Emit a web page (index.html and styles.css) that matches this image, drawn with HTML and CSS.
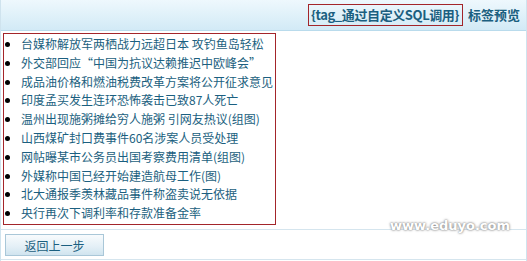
FILE: index.html
```html
<!doctype html>
<html lang="zh-CN">
    <head>
        <meta charset="utf-8">
        <title>标签预览</title>
        <link rel="stylesheet" href="styles.css">
    </head>
    <body>
        <div class="page">
            <div class="head">
                <span class="tag-name">{tag_通过自定义SQL调用}</span>
                <span class="head-title">标签预览</span>
            </div>
            <div class="preview">
                <ul class="list">
                    <li>台媒称解放军两栖战力远超日本 攻钓鱼岛轻松</li>
                    <li>外交部回应“中国为抗议达赖推迟中欧峰会”</li>
                    <li>成品油价格和燃油税费改革方案将公开征求意见</li>
                    <li>印度孟买发生连环恐怖袭击已致87人死亡</li>
                    <li>温州出现施粥摊给穷人施粥 引网友热议(组图)</li>
                    <li>山西煤矿封口费事件60名涉案人员受处理</li>
                    <li>网帖曝某市公务员出国考察费用清单(组图)</li>
                    <li>外媒称中国已经开始建造航母工作(图)</li>
                    <li>北大通报季羡林藏品事件称盗卖说无依据</li>
                    <li>央行再次下调利率和存款准备金率</li>
                </ul>
                <span class="mark">www.eduyo.com</span>
            </div>
            <div class="foot">
                <button class="btn">返回上一步</button>
            </div>
        </div>
    </body>
</html>
```

FILE: styles.css
```css
html {
    font-size: 12px;
    font-family: "Noto Sans CJK SC", "Liberation Sans", sans-serif;
}
body {
    margin: 0;
    background: #fff;
    color: #1b5f80;
}
.page {
    width: 527px;
    height: 261px;
    box-sizing: border-box;
    border-left: 1px solid #cfe3ee;
    border-right: 1px solid #cfe3ee;
    display: flex;
    flex-direction: column;
}
.head {
    height: 31px;
    flex-shrink: 0;
    box-sizing: border-box;
    display: flex;
    align-items: center;
    justify-content: flex-end;
    padding: 0 6px 1px 0;
    background: linear-gradient(#eef8fd, #d2eaf6);
    border-bottom: 1px solid #b9dbec;
    font-weight: bold;
    font-size: 13px;
    color: #1b5f80;
}
.tag-name {
    border: 1px solid #a3252a;
    padding: 2px 3px 2px 2px;
    margin-right: 5px;
    line-height: 16px;
    letter-spacing: -0.4px;
}
.head-title {
    font-size: 13px;
}
.preview {
    position: relative;
    flex-shrink: 0;
    padding: 2px 0 0 2px;
    height: 199px;
    box-sizing: border-box;
    border-bottom: 1px solid #d5e5ee;
}
.list {
    margin: 0;
    padding: 1px 0 1px 17px;
    width: 254px;
    border: 1px solid #a3252a;
    list-style: disc;
    line-height: 18.8px;
}
.list li {
    white-space: nowrap;
}
.list li::marker {
    color: #000;
}
.mark {
    position: absolute;
    left: 389px;
    top: 187px;
    font-family: "DejaVu Sans", sans-serif;
    font-size: 13px;
    line-height: 16px;
    font-weight: bold;
    color: #fff;
    text-shadow: 0 0 2px #777, 0 0 3px #aaa;
}
.foot {
    padding: 4px 4px 3px;
    border-bottom: 1px solid #d5e5ee;
}
.btn {
    display: block;
    width: 99px;
    height: 22px;
    border: 1px solid #a9c7d8;
    background: linear-gradient(#f8fbfd, #e3eff6 60%, #d0e4ef);
    color: #1b5f80;
    font: inherit;
    font-size: 12px;
    padding: 0;
}
```
